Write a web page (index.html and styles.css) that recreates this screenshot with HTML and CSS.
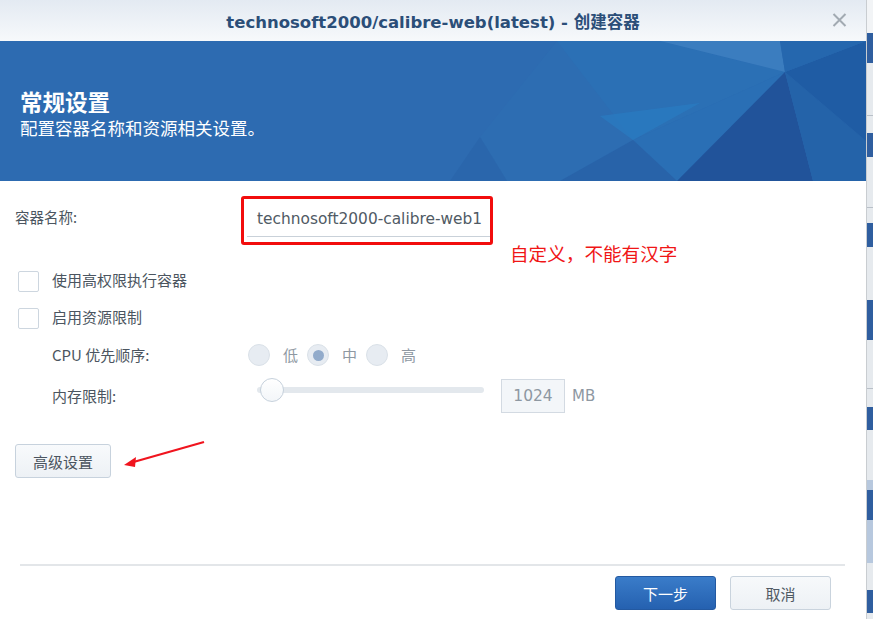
FILE: index.html
```html
<!DOCTYPE html>
<html lang="zh-CN">
<head>
<meta charset="utf-8">
<title>创建容器</title>
<link rel="stylesheet" href="styles.css">
</head>
<body>
<div class="page">
  <div class="dialog">
    <header class="titlebar">
      <div class="title">technosoft2000/calibre-web(latest) - 创建容器</div>
      <svg class="close" viewBox="0 0 15 14" width="15" height="14"><path d="M1.5 1 L13.5 13 M13.5 1 L1.5 13" stroke="#a2aab2" stroke-width="2" fill="none"/></svg>
    </header>

    <section class="banner">
      <svg class="banner-art" viewBox="0 0 866 140" preserveAspectRatio="none">
        <polygon points="480,96 557,0 660,0 633,99 560,140 507,140" fill="#2d6db2" />
        <polygon points="557,0 660,0 785,31 633,99" fill="#2b70b5" />
        <polygon points="660,0 780,0 785,31" fill="#3b7dbf" />
        <polygon points="633,99 785,31 677,140" fill="#2a6fb5" />
        <polygon points="600,75 700,62 633,99" fill="#2a7cc2" opacity="0.7" />
        <polygon points="560,140 633,99 677,140" fill="#2863a9" />
        <polygon points="480,96 507,140 450,140" fill="#2a66ac" />
        <polygon points="785,31 677,140 813,140" fill="#21539a" />
        <polygon points="785,31 813,140 866,140 866,100" fill="#2463a9" />
        <polygon points="785,31 866,0 866,100" fill="#1f5ca4" />
        <polygon points="780,0 866,0 785,31" fill="#2567ae" />
      </svg>
      <h1 class="banner-title">常规设置</h1>
      <p class="banner-sub">配置容器名称和资源相关设置。</p>
    </section>

    <main class="content">
      <div class="row name-row">
        <span class="label">容器名称:</span>
        <div class="highlight">
          <div class="text-input">technosoft2000-calibre-web1</div>
        </div>
        <span class="note">自定义，不能有汉字</span>
      </div>

      <div class="row check-row first">
        <span class="checkbox"></span>
        <span class="check-label">使用高权限执行容器</span>
      </div>
      <div class="row check-row">
        <span class="checkbox"></span>
        <span class="check-label">启用资源限制</span>
      </div>

      <div class="row sub-row cpu-row">
        <span class="sub-label">CPU 优先顺序:</span>
        <div class="radios">
          <span class="radio"></span><span class="radio-text">低</span>
          <span class="radio checked"></span><span class="radio-text">中</span>
          <span class="radio"></span><span class="radio-text">高</span>
        </div>
      </div>

      <div class="row sub-row mem-row">
        <span class="sub-label">内存限制:</span>
        <div class="slider"><span class="track"></span><span class="thumb"></span></div>
        <div class="num-box">1024</div>
        <span class="unit">MB</span>
      </div>

      <div class="adv-wrap">
        <button class="btn adv">高级设置</button>
        <svg class="arrow" viewBox="0 0 100 40" width="100" height="40">
          <path d="M82 4 L8 25" stroke="#f0141e" stroke-width="2.2" fill="none"/>
          <path d="M2 27 L14 19 L13 29 Z" fill="#f0141e"/>
        </svg>
      </div>
    </main>

    <footer class="footer">
      <button class="btn primary">下一步</button>
      <button class="btn cancel">取消</button>
    </footer>
  </div>
  <div class="desk"></div>
</div>
</body>
</html>
```

FILE: styles.css
```css
* { box-sizing: border-box; }

html, body {
  margin: 0;
  padding: 0;
  background: #ffffff;
}

body {
  font-family: "Noto Sans CJK SC", "DejaVu Sans", sans-serif;
  color: #4b5560;
}

.page {
  display: flex;
  width: 873px;
  height: 619px;
  overflow: hidden;
}

.dialog {
  width: 866px;
  height: 619px;
  display: flex;
  flex-direction: column;
  background: #ffffff;
}

.desk {
  width: 7px;
  border-left: 1px solid #c9cdd1;
  background: linear-gradient(to bottom,
    #f2f4f6 0 33px, #2f5e9f 33px 63px, #e6eaee 63px 115px, #b9c0c8 115px 116px,
    #e6eaee 116px 133px, #2f5e9f 133px 157px, #e6eaee 157px 207px, #b9c0c8 207px 208px,
    #e6eaee 208px 223px, #2f5e9f 223px 247px, #e6eaee 247px 300px,
    #2f5e9f 300px 340px, #e6eaee 340px 388px, #b9c0c8 388px 389px, #e6eaee 389px 407px,
    #2f5e9f 407px 430px, #e6eaee 430px 480px, #b7c8de 480px 490px, #2f5e9f 490px 520px,
    #b7c8de 520px 563px, #e6eaee 563px 590px, #2f5e9f 590px 613px, #e6eaee 613px);
}

/* Title bar */
.titlebar {
  position: relative;
  height: 41px;
  flex: 0 0 41px;
  display: flex;
  align-items: center;
  justify-content: center;
  background: linear-gradient(to bottom, #e3eaf2, #f7f9fb);
}

.title {
  font-family: "DejaVu Sans", "Noto Sans CJK SC", sans-serif;
  font-weight: bold;
  font-size: 16.5px;
  color: #2b4e78;
}

.close {
  position: absolute;
  right: 19px;
  top: 13px;
}

/* Banner */
.banner {
  position: relative;
  height: 140px;
  flex: 0 0 140px;
  background: #2d6bb1;
  padding: 47px 0 0 20px;
  color: #ffffff;
  overflow: hidden;
}

.banner-art {
  position: absolute;
  left: 0;
  top: 0;
  width: 866px;
  height: 140px;
}

.banner-title {
  position: relative;
  margin: 0;
  font-size: 22.5px;
  line-height: 26px;
  font-weight: bold;
}

.banner-sub {
  position: relative;
  margin: 3px 0 0;
  font-size: 17.5px;
  line-height: 22px;
}

/* Content */
.content {
  flex: 1;
  padding: 15px 0 0 0;
}

.row {
  display: flex;
  align-items: center;
}

.name-row {
  position: relative;
  align-items: flex-start;
  padding-left: 15px;
}

.label {
  width: 226px;
  font-size: 14.5px;
  line-height: 20px;
  padding-top: 11px;
  color: #4b5560;
}

.highlight {
  width: 252px;
  height: 49px;
  border: 3px solid #f20d0d;
  border-radius: 3px;
  padding: 3px 0 0 3px;
}

.text-input {
  width: 243px;
  height: 35px;
  border-bottom: 1px solid #c9d1d9;
  font-family: "DejaVu Sans", sans-serif;
  font-size: 15.4px;
  line-height: 34px;
  padding-left: 10px;
  color: #505a64;
  white-space: nowrap;
  overflow: hidden;
}

.note {
  position: absolute;
  left: 510px;
  top: 44px;
  font-size: 18.6px;
  line-height: 26px;
  color: #f01616;
  white-space: nowrap;
}

.check-row {
  padding-left: 18px;
  height: 21px;
  margin-top: 16px;
}

.check-row.first {
  margin-top: 26px;
}

.checkbox {
  width: 21px;
  height: 21px;
  border: 1px solid #cdd6df;
  border-radius: 2px;
  background: #ffffff;
}

.check-label {
  margin-left: 13px;
  margin-top: -3px;
  font-size: 15px;
  line-height: 20px;
  color: #4b5560;
}

.sub-row {
  padding-left: 52px;
}

.sub-label {
  width: 196px;
  font-size: 15px;
  line-height: 20px;
  color: #4b5560;
  font-family: "Noto Sans CJK SC", sans-serif;
}

.cpu-row {
  margin-top: 15px;
  height: 22px;
}

.radios {
  display: flex;
  align-items: center;
}

.radio {
  width: 22px;
  height: 22px;
  border-radius: 50%;
  background: #e7ecf2;
  border: 1px solid #dae1e8;
  display: flex;
  align-items: center;
  justify-content: center;
}

.radio.checked::after {
  content: "";
  width: 11px;
  height: 11px;
  border-radius: 50%;
  background: #92abcb;
}

.radio-text {
  margin: 0 9px 0 13px;
  font-size: 15px;
  line-height: 20px;
  color: #8e98a2;
}

.mem-row {
  margin-top: 13px;
  height: 34px;
}

.slider {
  position: relative;
  width: 227px;
  height: 24px;
  margin-left: 9px;
  align-self: flex-start;
  margin-top: -1px;
}

.track {
  position: absolute;
  left: 0;
  right: 0;
  top: 9px;
  height: 6px;
  border-radius: 3px;
  background: #e3e8ed;
}

.thumb {
  position: absolute;
  left: 3px;
  top: 0;
  width: 24px;
  height: 24px;
  border-radius: 50%;
  background: linear-gradient(#ffffff, #f3f6f9);
  border: 1px solid #c6d1dc;
}

.num-box {
  margin-left: 17px;
  width: 64px;
  height: 34px;
  border: 1px solid #d3dae2;
  background: #f3f6f9;
  text-align: center;
  font-family: "DejaVu Sans", sans-serif;
  font-size: 15.5px;
  line-height: 32px;
  color: #8e98a2;
}

.unit {
  margin-left: 7px;
  font-family: "DejaVu Sans", sans-serif;
  font-size: 15px;
  color: #8e98a2;
}

.adv-wrap {
  position: relative;
  margin-top: 31px;
  padding-left: 15px;
}

.btn {
  font-family: "Noto Sans CJK SC", sans-serif;
  font-size: 15px;
  height: 34px;
  border-radius: 3px;
  padding: 0;
  cursor: pointer;
}

.adv {
  width: 96px;
  background: linear-gradient(#f8fafc, #edf1f5);
  border: 1px solid #c7d2dd;
  color: #4b5560;
}

.arrow {
  position: absolute;
  left: 122px;
  top: -6px;
}

/* Footer */
.footer {
  flex: 0 0 55px;
  margin: 0 21px 0 20px;
  border-top: 2px solid #e3e6e9;
  padding: 10px 14px 0 0;
  display: flex;
  justify-content: flex-end;
  gap: 14px;
}

.primary {
  width: 101px;
  background: linear-gradient(#3a7cc9, #2561b0);
  border: 1px solid #2359a1;
  color: #ffffff;
}

.cancel {
  width: 101px;
  background: linear-gradient(#f7f9fb, #edf1f5);
  border: 1px solid #c9d3dd;
  color: #505a64;
}
```
